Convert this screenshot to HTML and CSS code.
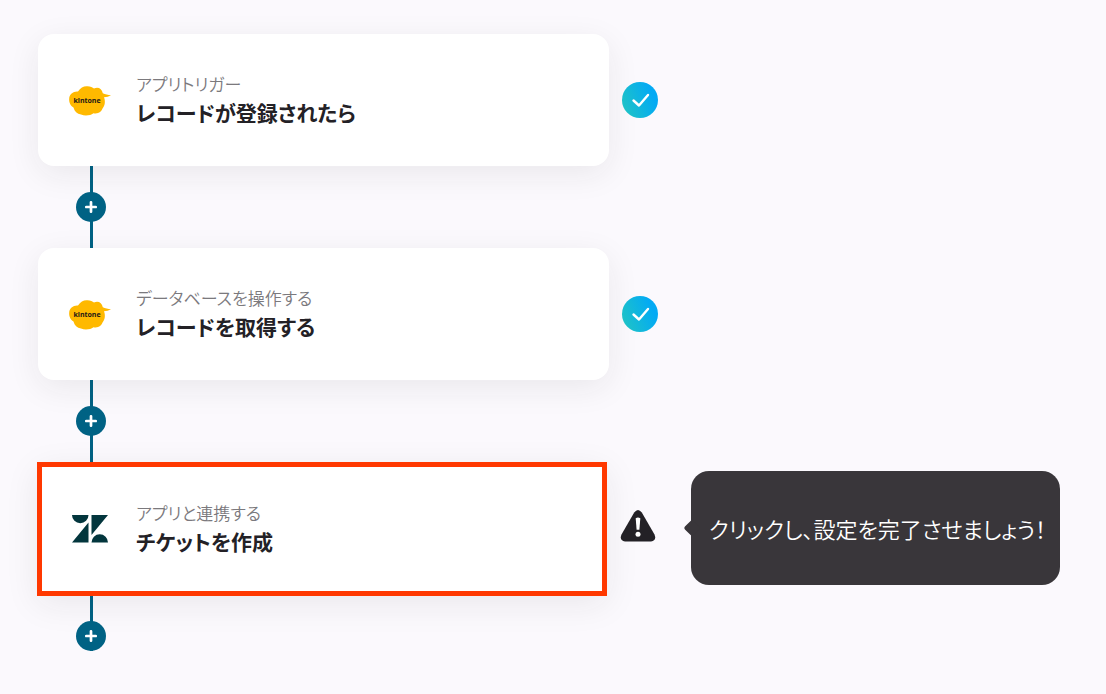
FILE: index.html
```html
<!DOCTYPE html>
<html lang="ja">
<head>
<meta charset="utf-8">
<meta name="viewport" content="width=device-width, initial-scale=1">
<title>フロー</title>
<link rel="stylesheet" href="styles.css">
</head>
<body>
<svg class="defs" aria-hidden="true">
  <defs>
    <linearGradient id="done" x1="0" y1="0.7" x2="1" y2="0.3">
      <stop offset="0" stop-color="#1fc3c6"/>
      <stop offset="0.85" stop-color="#03aaf4"/>
    </linearGradient>
    <symbol id="check" viewBox="0 0 36 36">
      <circle cx="18" cy="18" r="18" fill="url(#done)"/>
      <path d="M11.500 18.500L17 23.500L26 13" fill="none" stroke="#fff" stroke-width="2.400" stroke-linecap="round" stroke-linejoin="round"/>
    </symbol>
    <symbol id="plus" viewBox="0 0 12 12">
      <path d="M6 1.300V10.700M1.300 6H10.700" fill="none" stroke="#fff" stroke-width="2.700" stroke-linecap="round"/>
    </symbol>
    <symbol id="cloud" viewBox="0 0 44 32">
      <path d="M10 6.500C12.500 2.500 16 .8 19.500 1.200C22.500 1.300 24.500 2.200 26 3.500C30 1.500 34 3.600 34.800 8.200C37 9.600 40 9.600 43 10.200C41 11.600 38.500 12 36 12.200C37.500 16 37 20.500 34.800 23C33.500 27 30 29.200 25.500 28.200C22.500 30.500 17 31.200 13 29.500C9 29 6.500 26.500 5.500 22.500C2.500 21 .8 17 1.200 13.500C1.400 9 5.500 6 10 6.500Z" fill="#ffb900"/>
    </symbol>
  </defs>
</svg>
<main class="flow">
  <section class="step">
    <button class="card" type="button">
      <span class="logo kintone"><svg class="cloud"><use href="#cloud"/></svg><span class="brand">kintone</span></span>
      <span class="text"><span class="kind">アプリトリガー</span><span class="title">レコードが登録されたら</span></span>
    </button>
    <svg class="status" role="img" aria-label="完了"><use href="#check"/></svg>
  </section>
  <div class="link"><button class="add" type="button" aria-label="追加"><svg class="plus"><use href="#plus"/></svg></button></div>
  <section class="step">
    <button class="card" type="button">
      <span class="logo kintone"><svg class="cloud"><use href="#cloud"/></svg><span class="brand">kintone</span></span>
      <span class="text"><span class="kind">データベースを操作する</span><span class="title">レコードを取得する</span></span>
    </button>
    <svg class="status" role="img" aria-label="完了"><use href="#check"/></svg>
  </section>
  <div class="link"><button class="add" type="button" aria-label="追加"><svg class="plus"><use href="#plus"/></svg></button></div>
  <section class="step">
    <button class="card selected" type="button">
      <span class="logo"><svg class="zendesk" viewBox="0 0 36 28">
        <path d="M0 0H16.500A8.250 8.250 0 0 1 0 0ZM16.500 7.500V27.500H0ZM19.500 0H36L19.500 20ZM19.500 27.500A8.250 8.250 0 0 1 36 27.500Z" fill="#03363d"/>
      </svg></span>
      <span class="text"><span class="kind">アプリと連携する</span><span class="title">チケットを作成</span></span>
    </button>
    <svg class="status" viewBox="0 1 36 36" role="img" aria-label="警告">
      <path d="M14.200 2.500Q18 -2.600 21.800 2.500L34.500 24.500Q37 30.500 31 31.500H5Q-1 30.500 1.500 24.500Z" fill="#232126"/>
      <path d="M15.700 8.300Q18 6.900 20.300 8.300L19.400 19.800H16.600Z" fill="#fff"/>
      <circle cx="18" cy="24.200" r="2.500" fill="#fff"/>
    </svg>
    <p class="tip" role="tooltip">クリックし、設定を完了させましょう！</p>
  </section>
  <div class="link last"><button class="add" type="button" aria-label="追加"><svg class="plus"><use href="#plus"/></svg></button></div>
</main>
</body>
</html>
```
FILE: styles.css
```css
* { box-sizing: border-box; }
body {
  margin: 0;
  background: #fbf9fd;
  color: #232126;
  font-family: "Noto Sans CJK JP", "Noto Sans", sans-serif;
  font-feature-settings: "palt";
}
.defs { position: absolute; width: 0; height: 0; }
button { border: 0; padding: 0; font: inherit; color: inherit; cursor: pointer; }
.flow { padding: 34px 46px 32px 38px; }
.step { display: flex; align-items: center; }
.card {
  flex: 0 1 571px;
  min-height: 132px;
  padding: 16px 30px;
  display: flex;
  align-items: center;
  gap: 24px;
  text-align: left;
  background: #fff;
  border-radius: 16px;
  box-shadow: 0 8px 32px rgba(35, 33, 38, 0.08);
}
.selected {
  flex-basis: 570px;
  min-height: 134px;
  margin-left: -1px;
  padding: 16px 26px;
  border: 5px solid #ff3800;
  border-radius: 0;
}
.logo { width: 44px; display: grid; place-items: center; }
.kintone { padding-top: 2px; }
.cloud { grid-area: 1 / 1; width: 44px; height: 32px; }
.brand {
  grid-area: 1 / 1;
  padding-right: 6px;
  font: bold 7px/8px "Open Sans", sans-serif;
  color: #231815;
}
.zendesk { width: 36px; height: 28px; }
.text { display: grid; }
.kind { font-size: 17px; line-height: 24px; font-weight: 350; color: #7b797d; }
.title { font-size: 21px; line-height: 32px; font-weight: 700; }
.status { flex: none; width: 36px; height: 36px; margin-left: 13px; overflow: visible; }
.link {
  width: 106px;
  height: 82px;
  display: grid;
  place-items: center;
  background: linear-gradient(#006284, #006284) center / 3px 100% no-repeat;
}
.last { height: 55px; align-items: end; }
.add {
  width: 30px;
  height: 30px;
  display: grid;
  place-items: center;
  border-radius: 50%;
  background: #006284;
}
.plus { width: 12px; height: 12px; }
.tip {
  position: relative;
  flex: 0 1 369px;
  min-height: 114px;
  margin: 0 0 2px 35px;
  padding: 16px 8px 16px 18px;
  display: flex;
  align-items: center;
  border-radius: 18px;
  background: #39363a;
  color: #fff;
  font-size: 22px;
  line-height: 32px;
  font-weight: 350;
}
.tip::before {
  content: "";
  position: absolute;
  left: -5px;
  top: 50%;
  width: 12px;
  height: 12px;
  margin-top: -6px;
  border-radius: 2px;
  background: #39363a;
  transform: rotate(45deg);
}
```
